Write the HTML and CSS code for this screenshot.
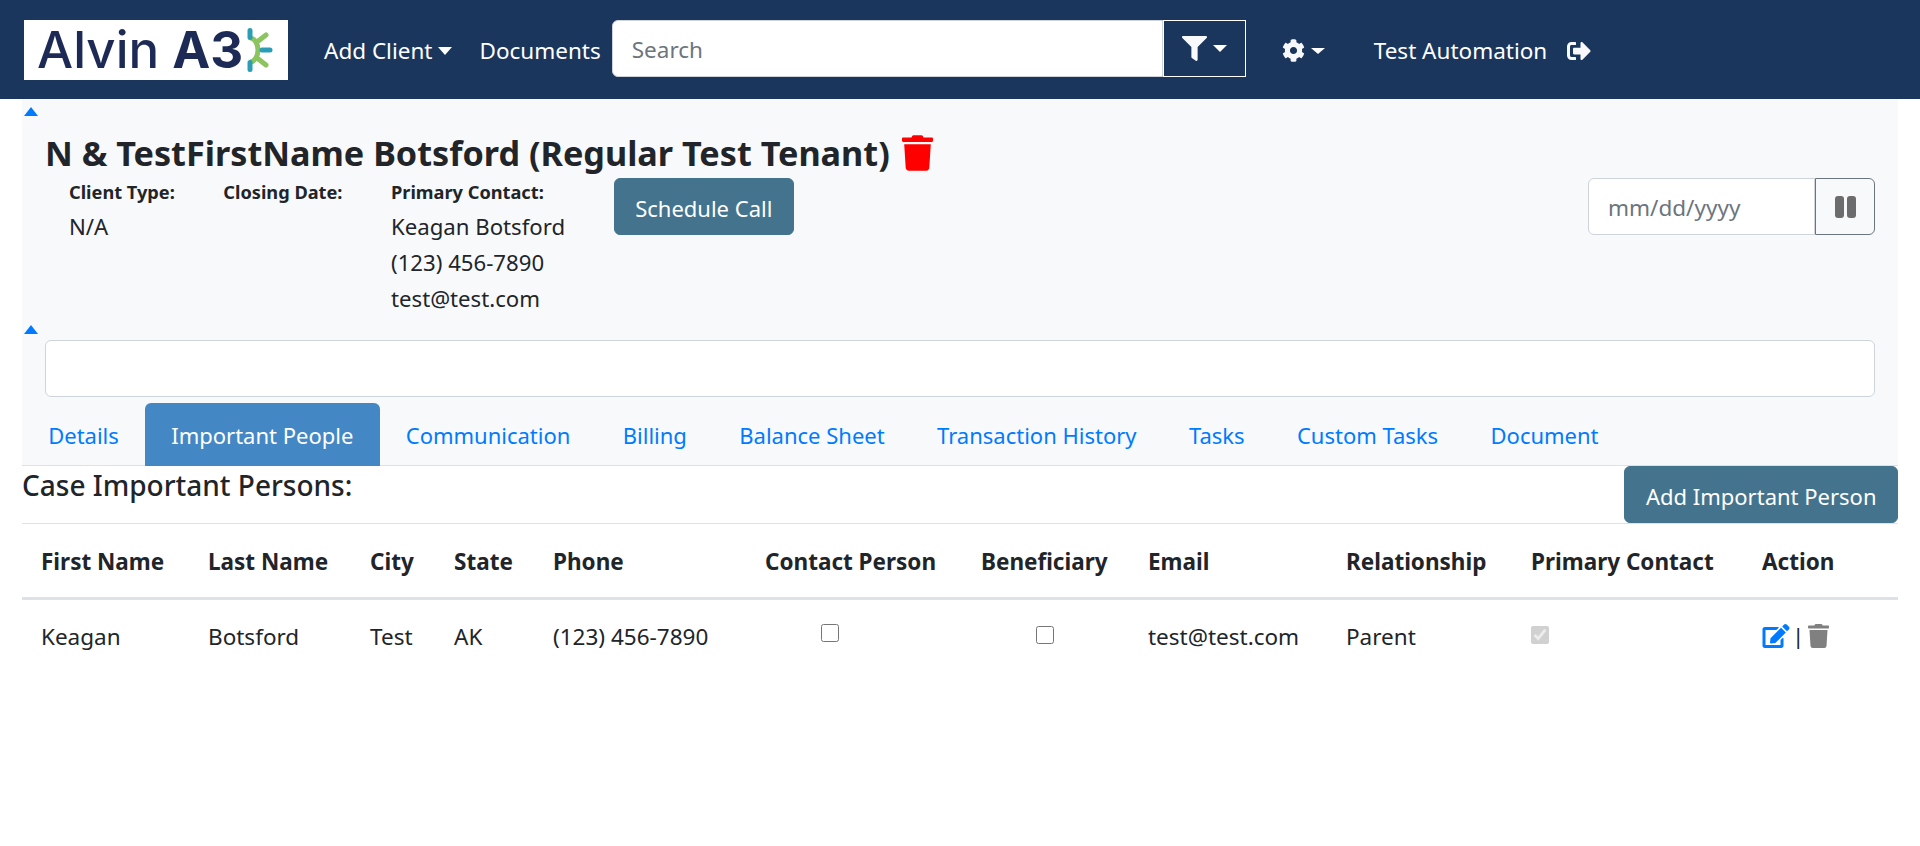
FILE: index.html
```html
<!DOCTYPE html>
<html lang="en">
<head>
  <meta charset="UTF-8">
  <title>Alvin A3</title>
  <link rel="stylesheet" href="styles.css">
</head>
<body>

  <nav class="navbar">
    <a class="logo">
      <span class="logo-thin">Alvin</span>
      <span class="logo-bold">A3</span>
      <svg class="logo-mark" viewBox="0 0 30 48" width="30" height="48">
        <path d="M3 12A8 12 0 0 1 3 36" fill="none" stroke="#8cc55f" stroke-width="5"/>
        <path d="M10 16l9-7M10 32l9 7" stroke="#8cc55f" stroke-width="5" stroke-linecap="round"/>
        <path d="M3 4.500v7M3 36.500v7M15 24h8" stroke="#2b9db5" stroke-width="5" stroke-linecap="round"/>
      </svg>
    </a>
    <a class="nav-link nav-add">Add Client<span class="caret"></span></a>
    <a class="nav-link nav-docs">Documents</a>
    <div class="search-group">
      <input class="search-input" type="text" placeholder="Search">
      <button class="filter-btn">
        <svg class="icon" viewBox="0 0 512 512" width="25" height="25"><path fill="#f8f9fa" d="M487.976 0H24.028C2.71 0-8.047 25.866 7.058 40.971L192 225.941V432c0 7.831 3.821 15.17 10.237 19.662l80 55.98C298.020 518.690 320 507.493 320 487.980V225.941l184.947-184.970C520.021 25.896 509.338 0 487.976 0z"/></svg>
        <span class="caret"></span>
      </button>
    </div>
    <a class="nav-link nav-gear">
      <svg class="icon" viewBox="0 0 512 512" width="23" height="23"><path fill="#f8f9fa" d="M487.400 315.700l-42.600-24.600c4.300-23.200 4.300-47 0-70.200l42.600-24.600c4.900-2.800 7.100-8.600 5.500-14-11.100-35.600-30-67.800-54.700-94.600-3.800-4.100-10-5.100-14.800-2.300L380.800 110c-17.900-15.400-38.500-27.300-60.800-35.100V25.800c0-5.600-3.900-10.500-9.400-11.700-36.700-8.200-74.300-7.800-109.200 0-5.500 1.200-9.400 6.100-9.400 11.700V75c-22.200 7.900-42.800 19.800-60.800 35.100L88.700 85.500c-4.900-2.800-11-1.900-14.800 2.300-24.700 26.700-43.600 58.900-54.700 94.600-1.700 5.400.6 11.200 5.500 14L67.300 221c-4.300 23.200-4.300 47 0 70.200l-42.600 24.600c-4.900 2.800-7.100 8.600-5.500 14 11.100 35.600 30 67.800 54.700 94.600 3.800 4.100 10 5.100 14.800 2.300l42.600-24.600c17.900 15.400 38.500 27.300 60.800 35.100v49.200c0 5.600 3.900 10.500 9.400 11.700 36.700 8.200 74.300 7.800 109.200 0 5.500-1.200 9.400-6.100 9.400-11.700v-49.200c22.200-7.900 42.800-19.800 60.800-35.100l42.600 24.600c4.900 2.800 11 1.900 14.800-2.300 24.700-26.700 43.600-58.900 54.700-94.600 1.500-5.500-.7-11.300-5.600-14.100zM256 336c-44.100 0-80-35.900-80-80s35.900-80 80-80 80 35.900 80 80-35.900 80-80 80z"/></svg>
      <span class="caret caret-small"></span>
    </a>
    <a class="nav-link nav-user">Test Automation<svg class="icon icon-signout" viewBox="0 0 512 512" width="24" height="24"><path fill="#f8f9fa" d="M497 273L329 441c-15 15-41 4.500-41-17v-96H152c-13.300 0-24-10.700-24-24v-96c0-13.300 10.700-24 24-24h136V88c0-21.400 25.900-32 41-17l168 168c9.300 9.400 9.300 24.600 0 34zM192 436v-40c0-6.600-5.400-12-12-12H96c-17.700 0-32-14.300-32-32V160c0-17.700 14.300-32 32-32h84c6.600 0 12-5.400 12-12V76c0-6.600-5.400-12-12-12H96c-53 0-96 43-96 96v192c0 53 43 96 96 96h84c6.600 0 12-5.400 12-12z"/></svg></a>
  </nav>

  <main class="content">
    <section class="case-panel">
      <span class="toggle"></span>
      <h1 class="case-title">N &amp; TestFirstName Botsford (Regular Test Tenant)
        <svg class="icon" viewBox="0 0 448 512" width="31" height="36"><path fill="#ff0000" d="M432 32H312l-9.400-18.700A24 24 0 0 0 281.100 0H166.800a23.720 23.720 0 0 0-21.400 13.300L136 32H16A16 16 0 0 0 0 48v32a16 16 0 0 0 16 16h416a16 16 0 0 0 16-16V48a16 16 0 0 0-16-16zM53.200 467a48 48 0 0 0 47.900 45h245.800a48 48 0 0 0 47.900-45L416 128H32z"/></svg>
      </h1>
      <div class="case-info">
        <div class="info-col">
          <div class="info-label">Client Type:</div>
          <div class="info-value">N/A</div>
        </div>
        <div class="info-col">
          <div class="info-label">Closing Date:</div>
        </div>
        <div class="info-col">
          <div class="info-label">Primary Contact:</div>
          <div class="info-value">Keagan Botsford</div>
          <div class="info-value">(123) 456-7890</div>
          <div class="info-value">test@test.com</div>
        </div>
        <button class="btn">Schedule Call</button>
        <div class="date-group">
          <input class="date-input" type="text" placeholder="mm/dd/yyyy">
          <button class="pause-btn">
            <svg viewBox="0 0 21 22" width="21" height="22"><rect width="9" height="22" rx="3" fill="#6c6c6c"/><rect x="12" width="9" height="22" rx="3" fill="#6c6c6c"/></svg>
          </button>
        </div>
      </div>
      <span class="toggle toggle-second"></span>
      <input class="note-input" type="text">
      <ul class="tabs">
        <li class="tab">Details</li>
        <li class="tab active">Important People</li>
        <li class="tab">Communication</li>
        <li class="tab">Billing</li>
        <li class="tab">Balance Sheet</li>
        <li class="tab">Transaction History</li>
        <li class="tab">Tasks</li>
        <li class="tab">Custom Tasks</li>
        <li class="tab">Document</li>
      </ul>
    </section>

    <div class="section-head">
      <h2 class="section-title">Case Important Persons:</h2>
      <button class="btn">Add Important Person</button>
    </div>

    <table class="people-table">
      <colgroup>
        <col class="c-first"><col class="c-last"><col class="c-city"><col class="c-state"><col class="c-phone">
        <col class="c-contact"><col class="c-benef"><col class="c-email"><col class="c-rel"><col class="c-primary"><col class="c-action">
      </colgroup>
      <thead>
        <tr>
          <th>First Name</th>
          <th>Last Name</th>
          <th>City</th>
          <th>State</th>
          <th>Phone</th>
          <th>Contact Person</th>
          <th>Beneficiary</th>
          <th>Email</th>
          <th>Relationship</th>
          <th>Primary Contact</th>
          <th>Action</th>
        </tr>
      </thead>
      <tbody>
        <tr>
          <td>Keagan</td>
          <td>Botsford</td>
          <td>Test</td>
          <td>AK</td>
          <td>(123) 456-7890</td>
          <td><input class="check check-contact" type="checkbox"></td>
          <td><input class="check check-benef" type="checkbox"></td>
          <td>test@test.com</td>
          <td>Parent</td>
          <td><input class="check check-primary" type="checkbox" checked disabled></td>
          <td>
            <div class="actions">
              <svg viewBox="0 0 576 512" width="28" height="24"><path fill="#007bff" d="M402.600 83.200l90.200 90.200c3.800 3.800 3.800 10 0 13.800L274.400 405.600l-92.800 10.300c-12.400 1.400-22.900-9.100-21.500-21.500l10.300-92.800L388.800 83.200c3.800-3.800 10-3.800 13.800 0zm162-22.900l-48.800-48.800c-15.200-15.200-39.900-15.200-55.200 0l-35.400 35.400c-3.800 3.800-3.800 10 0 13.800l90.200 90.200c3.800 3.800 10 3.800 13.800 0l35.400-35.400c15.200-15.300 15.200-40 0-55.200zM384 346.200V448H64V128h229.800c3.200 0 6.200-1.300 8.500-3.500l40-40c7.600-7.600 2.200-20.500-8.500-20.500H48C21.500 64 0 85.500 0 112v352c0 26.500 21.500 48 48 48h352c26.500 0 48-21.500 48-48V306.200c0-10.700-12.900-16-20.500-8.500l-40 40c-2.200 2.300-3.500 5.300-3.500 8.500z"/></svg>
              <span class="pipe">|</span>
              <svg class="action-trash" viewBox="0 0 448 512" width="21" height="24"><path fill="#808080" d="M432 32H312l-9.400-18.700A24 24 0 0 0 281.100 0H166.800a23.720 23.720 0 0 0-21.400 13.300L136 32H16A16 16 0 0 0 0 48v32a16 16 0 0 0 16 16h416a16 16 0 0 0 16-16V48a16 16 0 0 0-16-16zM53.200 467a48 48 0 0 0 47.900 45h245.800a48 48 0 0 0 47.900-45L416 128H32z"/></svg>
            </div>
          </td>
        </tr>
      </tbody>
    </table>
  </main>

</body>
</html>
```

FILE: styles.css
```css
* {
  box-sizing: border-box;
}

body {
  margin: 0;
  background: #fff;
  color: #212529;
  font-family: "Noto Sans", "Open Sans", sans-serif;
  font-size: 22.5px;
}

/* Navbar */
.navbar {
  display: flex;
  align-items: center;
  height: 99px;
  padding-left: 24px;
  background: #1b365d;
  color: #fff;
}

.logo {
  display: flex;
  align-items: center;
  width: 264px;
  height: 60px;
  padding-left: 13px;
  background: #fff;
  color: #1c2a55;
  font-family: "Inter", sans-serif;
  font-size: 51px;
}

.logo-thin {
  font-weight: 500;
}

.logo-bold {
  margin-left: 13px;
  font-weight: 700;
}

.logo-mark {
  margin-left: 4px;
}

.nav-link {
  display: flex;
  align-items: center;
  padding-top: 2px;
}

.nav-add {
  margin-left: 36px;
}

.nav-docs {
  margin-left: 27px;
}

.nav-gear {
  margin-left: 36px;
}

.nav-user {
  margin-left: 49px;
}

.icon-signout {
  margin-left: 20px;
}

.caret {
  display: inline-block;
  margin-left: 6px;
  border-top: 8px solid #fff;
  border-left: 7.5px solid transparent;
  border-right: 7.5px solid transparent;
}

.caret-small {
  margin-left: 6px;
  border-top-width: 6px;
  border-left-width: 7px;
  border-right-width: 7px;
}

.search-group {
  display: flex;
  height: 57px;
  margin: 0 0 2px 11px;
}

.search-input {
  width: 551px;
  padding: 1px 19px 0;
  border: 1px solid #ced4da;
  border-radius: 6px 0 0 6px;
  outline: none;
  font: inherit;
}

.search-input::placeholder,
.date-input::placeholder {
  color: #6c757d;
}

.filter-btn {
  display: flex;
  align-items: center;
  justify-content: center;
  width: 83px;
  border: 1px solid #fff;
  background: #1b365d;
  gap: 6px;
}

.filter-btn .caret {
  margin-left: 0;
  border-top-width: 7px;
  border-left-width: 7px;
  border-right-width: 7px;
}

/* Case panel */
.content {
  margin: 0 22px;
}

.case-panel {
  padding-top: 8px;
  background: #f8f9fa;
}

.toggle {
  display: block;
  width: 0;
  margin-left: 2px;
  border-bottom: 9px solid #007bff;
  border-left: 7px solid transparent;
  border-right: 7px solid transparent;
}

.toggle-second {
  margin-top: 8px;
}

.case-title {
  display: flex;
  align-items: center;
  gap: 12px;
  margin: 16px 0 5px 23px;
  font-size: 34.2px;
  font-weight: 700;
  line-height: 41px;
}

.case-info {
  display: flex;
  align-items: flex-start;
  gap: 48.5px;
  padding: 0 23px 0 47px;
  height: 139px;
}

.info-label {
  padding-bottom: 2px;
  font-size: 18.2px;
  font-weight: 700;
  line-height: 29px;
}

.info-value {
  font-size: 22.2px;
  line-height: 36px;
}

.btn {
  height: 57px;
  padding: 2px 20.5px 0;
  border: 1px solid #44748d;
  border-radius: 6px;
  background: #44748d;
  color: #fff;
  font: inherit;
  font-size: 22px;
}

.date-group {
  display: flex;
  height: 57px;
  margin-left: auto;
}

.date-input {
  width: 227px;
  padding: 1px 19px 0;
  border: 1px solid #ced4da;
  border-radius: 6px 0 0 6px;
  outline: none;
  font: inherit;
}

.pause-btn {
  display: flex;
  align-items: center;
  justify-content: center;
  width: 60px;
  border: 1px solid #6c757d;
  border-radius: 0 6px 6px 0;
  background: transparent;
}

.note-input {
  display: block;
  width: 1830px;
  height: 57px;
  margin: 6px 0 6px 23px;
  border: 1px solid #ced4da;
  border-radius: 6px;
  outline: none;
}

.tabs {
  display: flex;
  height: 63px;
  margin: 0;
  padding: 0;
  border-bottom: 1px solid #dee2e6;
  list-style: none;
}

.tab {
  height: 63px;
  padding: 0 26.2px;
  border-radius: 6px 6px 0 0;
  color: #007bff;
  font-size: 22px;
  line-height: 64px;
}

.tab.active {
  background: #4388c5;
  color: #fff;
}

/* Important persons */
.section-head {
  display: flex;
  justify-content: space-between;
  height: 58px;
  border-bottom: 1px solid #dee2e6;
}

.section-title {
  margin: 0;
  font-size: 28px;
  font-weight: 500;
  line-height: 38px;
}

.people-table {
  width: 100%;
  border-collapse: collapse;
  table-layout: fixed;
}

.c-first { width: 167px; }
.c-last { width: 162px; }
.c-city { width: 84px; }
.c-state { width: 99px; }
.c-phone { width: 212px; }
.c-contact { width: 216px; }
.c-benef { width: 167px; }
.c-email { width: 198px; }
.c-rel { width: 185px; }
.c-primary { width: 231px; }
.c-action { width: 155px; }

.people-table th {
  height: 74px;
  padding: 2px 0 0 19px;
  border-bottom: 3px solid #dee2e6;
  font-weight: 700;
  text-align: left;
  white-space: nowrap;
}

.people-table td {
  height: 74px;
  padding: 2px 0 0 19px;
  white-space: nowrap;
}

.check {
  display: block;
  width: 18px;
  height: 18px;
  margin: -4px 0 0;
}

.check-contact {
  margin: -8px 0 0 56px;
}

.check-benef {
  margin-left: 55px;
}

.check-primary {
  margin-left: 0;
}

.actions {
  display: flex;
  align-items: center;
  gap: 2px;
  margin-top: -2px;
}

.action-trash {
  margin-left: 2px;
}
```
